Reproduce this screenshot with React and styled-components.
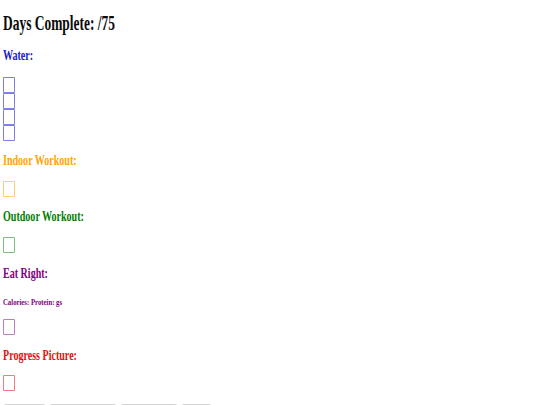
import React from "react";
import styled, { createGlobalStyle } from "styled-components";

const GlobalStyle = createGlobalStyle`
  html, body {
    margin: 0;
    padding: 0;
    background: #ffffff;
  }
  body {
    font-family: "Liberation Serif", "Times New Roman", serif;
  }
`;

const sections = [
  { title: "Indoor Workout:", color: "#ffa500", box: "rgba(255, 165, 0, 0.55)" },
  { title: "Outdoor Workout:", color: "#008000", box: "rgba(0, 128, 0, 0.5)" },
];

const App = () => {
  return (
    <>
      <GlobalStyle />
      <Page>
        <Title>Days Complete: /75</Title>

        <Heading color="#1a1acc" $top={12}>Water:</Heading>
        <BoxStack $top={13}>
          {[0, 1, 2, 3].map((i) => (
            <Check key={i} type="checkbox" $border="rgba(40, 40, 210, 0.6)" />
          ))}
        </BoxStack>

        {sections.map((s) => (
          <React.Fragment key={s.title}>
            <Heading color={s.color}>{s.title}</Heading>
            <BoxStack>
              <Check type="checkbox" $border={s.box} />
            </BoxStack>
          </React.Fragment>
        ))}

        <Heading color="#800080" $top={12}>Eat Right:</Heading>
        <Note>Calories: Protein: gs</Note>
        <BoxStack $top={11}>
          <Check type="checkbox" $border="rgba(128, 0, 128, 0.5)" />
        </BoxStack>

        <Heading color="#e81010" $top={12}>Progress Picture:</Heading>
        <BoxStack $top={11}>
          <Check type="checkbox" $border="rgba(220, 20, 20, 0.55)" />
        </BoxStack>

        <ButtonRow>
          <Button $w={43}>Save</Button>
          <Button $w={68}>Complete Day</Button>
          <Button $w={58}>Reset Day</Button>
          <Button $w={31}>Log</Button>
        </ButtonRow>
      </Page>
    </>
  );
};

export default App;

const Page = styled.div`
  display: flex;
  flex-direction: column;
  align-items: flex-start;
  padding: 11px 0 0 3px;
`;

const Title = styled.h1`
  margin: 0;
  font-size: 21px;
  line-height: 24px;
  font-weight: 700;
  color: #0a0a0a;
  transform: scaleX(0.64);
  transform-origin: left center;
  white-space: nowrap;
`;

const Heading = styled.h2`
  margin: ${(p) => p.$top ?? 11}px 0 0;
  font-size: 15px;
  line-height: 17px;
  font-weight: 700;
  color: ${(p) => p.color};
  transform: scaleX(0.67);
  transform-origin: left center;
  white-space: nowrap;
`;

const Note = styled.p`
  margin: 15px 0 0;
  font-size: 9px;
  line-height: 11px;
  font-weight: 700;
  color: #800080;
  transform: scaleX(0.75);
  transform-origin: left center;
  white-space: nowrap;
`;

const BoxStack = styled.div`
  display: flex;
  flex-direction: column;
  margin-top: ${(p) => p.$top ?? 12}px;
`;

const Check = styled.input`
  appearance: none;
  margin: 0;
  width: 12px;
  height: 16px;
  box-sizing: border-box;
  border: 1px solid ${(p) => p.$border};
  border-radius: 1px;
  background: #fff;
`;

const ButtonRow = styled.div`
  display: flex;
  gap: 3px;
  margin-top: 13px;
`;

const Button = styled.button`
  width: ${(p) => p.$w}px;
  height: 20px;
  padding: 0;
  border: 1px solid #d4d4d4;
  border-radius: 3px;
  background: #efefef;
  font-family: "Liberation Sans", Arial, sans-serif;
  font-size: 9px;
  color: #222;
`;
